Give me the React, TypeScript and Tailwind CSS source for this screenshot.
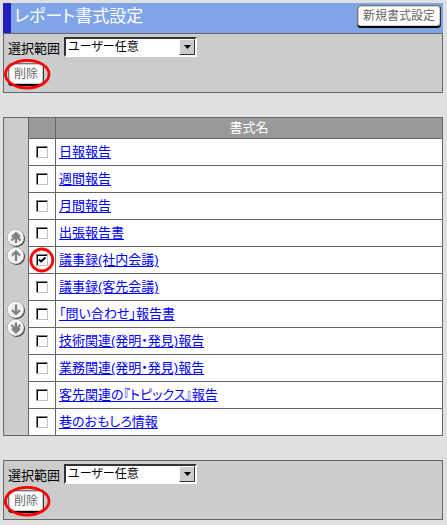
import { useState } from "react";

const REPORTS = [
  "日報報告",
  "週間報告",
  "月間報告",
  "出張報告書",
  "議事録(社内会議)",
  "議事録(客先会議)",
  "「問い合わせ」報告書",
  "技術関連(発明・発見)報告",
  "業務関連(発明・発見)報告",
  "客先関連の『トピックス』報告",
  "巷のおもしろ情報",
];

const ARROWS = {
  top: { label: "一番上へ", path: "M5 8 L9 4 L13 8 M4.5 11.5 L9 7 L13.5 11.5 M9 4 V14" },
  up: { label: "上へ", path: "M5 8.5 L9 4.5 L13 8.5 M9 4.5 V14" },
  down: { label: "下へ", path: "M5 9 L9 13 L13 9 M9 13 V3.5" },
  bottom: { label: "一番下へ", path: "M4.5 6 L9 10.5 L13.5 6 M5 9.5 L9 13.5 L13 9.5 M9 13.5 V3.5" },
};

function ArrowButton({ kind }: { kind: keyof typeof ARROWS }) {
  const { label, path } = ARROWS[kind];
  return (
    <button type="button" aria-label={label} className="block">
      <svg width="18" height="18" viewBox="0 0 18 18" fill="none">
        <circle cx="9.6" cy="9.6" r="8.4" fill="#333" />
        <circle cx="8.7" cy="8.7" r="8.3" fill="#fff" stroke="#999" strokeWidth="0.6" />
        <circle cx="9" cy="9" r="6.8" fill="#eee" />
        <path d={path} stroke="#808080" strokeWidth="2.2" />
      </svg>
    </button>
  );
}

function PushButton({ children }: { children: string }) {
  return (
    <button
      type="button"
      className="h-[22px] rounded-[4px] border border-t-[#777] border-r-[#333] border-b-black border-l-[#777] bg-white px-[5px] text-xs leading-4 whitespace-nowrap text-[#666] shadow-[inset_-1px_-1px_0_#ccc,inset_1px_1px_0_#ccc,0_1px_0_#000]"
    >
      {children}
    </button>
  );
}

function RangePanel({ id }: { id: string }) {
  return (
    <section className="border border-[#666] bg-[#ccc] px-1 pt-[3px] pb-[7px]">
      <div className="flex items-end gap-1">
        <label htmlFor={id} className="leading-4">
          選択範囲
        </label>
        <div className="relative">
          <select
            id={id}
            className="block h-5 w-[133px] appearance-none border-2 border-t-[#333] border-r-white border-b-white border-l-[#333] bg-white pr-4 pl-[2px] text-xs leading-4 text-black outline-none"
          >
            <option>ユーザー任意</option>
          </select>
          <span className="pointer-events-none absolute top-[2px] right-[2px] flex h-4 w-4 items-center justify-center border border-t-white border-r-[#333] border-b-[#333] border-l-white bg-[#ccc]">
            <svg width="7" height="4" viewBox="0 0 7 4">
              <path d="M0 0 H7 L3.5 4 Z" fill="#000" />
            </svg>
          </span>
        </div>
      </div>
      <div className="relative mt-[6px] flex">
        <PushButton>削除</PushButton>
        <svg
          className="pointer-events-none absolute -top-1 -left-1"
          width="47"
          height="31"
          viewBox="0 0 47 31"
          fill="none"
        >
          <ellipse cx="23.2" cy="15.2" rx="21.8" ry="13.8" stroke="#f00" strokeWidth="2.8" />
        </svg>
      </div>
    </section>
  );
}

function ReportRow({ name, index }: { name: string; index: number }) {
  const [checked, setChecked] = useState(index === 4);
  return (
    <>
      <td className="h-[27px] border border-[#666] bg-white p-0">
        <div className="relative mx-auto h-3 w-3">
          <input
            type="checkbox"
            aria-label={name}
            checked={checked}
            onChange={(e) => setChecked(e.target.checked)}
            className="block h-3 w-3 appearance-none border border-t-[#808080] border-r-[#c0c0c0] border-b-[#c0c0c0] border-l-[#808080] bg-white shadow-[inset_1px_1px_0_#000]"
          />
          {checked && (
            <svg
              className="pointer-events-none absolute top-0 left-0"
              width="12"
              height="12"
              viewBox="0 0 12 12"
              fill="none"
            >
              <path d="M3 5.5 L5 7.5 L9.5 3.5" stroke="#000" strokeWidth="2" />
            </svg>
          )}
          {index === 4 && (
            <svg
              className="pointer-events-none absolute -top-[7px] -left-[7px]"
              width="26"
              height="26"
              viewBox="0 0 26 26"
              fill="none"
            >
              <circle cx="12.8" cy="13" r="11" stroke="#f00" strokeWidth="2.8" />
            </svg>
          )}
        </div>
      </td>
      <td className="border border-[#666] bg-white px-[3px] py-0">
        <a href="#" className="text-[#00f] underline underline-offset-2">
          {name}
        </a>
      </td>
    </>
  );
}

export default function App() {
  return (
    <main className="min-h-screen bg-[#e0e0e0] py-[3px] pr-1 pl-[3px] font-['Liberation_Sans','Noto_Sans_CJK_JP',sans-serif] text-[13px] leading-4 text-black [font-feature-settings:'palt']">
      <header className="flex h-[30px] items-start justify-between border-l-8 border-[#2020c0] bg-[#7fa5e8] pt-[2px] pr-[2px] pl-[3px]">
        <h1 className="text-[17px] leading-6 text-white">レポート書式設定</h1>
        <PushButton>新規書式設定</PushButton>
      </header>
      <RangePanel id="range-top" />

      <table className="my-6 w-full table-fixed border-collapse border border-[#666]">
        <colgroup>
          <col className="w-[25px]" />
          <col className="w-[27px]" />
          <col />
        </colgroup>
        <tbody>
          <tr>
            <td rowSpan={REPORTS.length + 1} className="border border-[#666] bg-[#ccc] p-0">
              <div className="flex flex-col items-center gap-9 pt-3">
                <div>
                  <ArrowButton kind="top" />
                  <ArrowButton kind="up" />
                </div>
                <div>
                  <ArrowButton kind="down" />
                  <ArrowButton kind="bottom" />
                </div>
              </div>
            </td>
            <td className="h-[21px] border border-[#666] bg-[#999] p-0" />
            <th scope="col" className="border border-[#666] bg-[#999] p-0 font-normal text-white">
              書式名
            </th>
          </tr>
          {REPORTS.map((name, i) => (
            <tr key={name}>
              <ReportRow name={name} index={i} />
            </tr>
          ))}
        </tbody>
      </table>

      <RangePanel id="range-bottom" />
    </main>
  );
}
